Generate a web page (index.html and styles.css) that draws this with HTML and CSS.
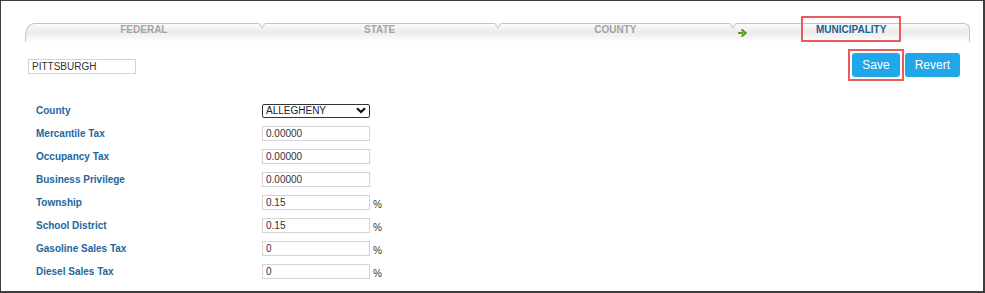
FILE: index.html
```html
<!DOCTYPE html>
<html lang="en">
<head>
    <meta charset="UTF-8">
    <meta name="viewport" content="width=device-width, initial-scale=1.0">
    <title>Municipality</title>
    <link rel="stylesheet" href="styles.css">
</head>
<body>
    <div class="frame">
        <ul class="tabs">
            <li class="tab first">FEDERAL</li>
            <li class="tab">STATE</li>
            <li class="tab">COUNTY</li>
            <li class="tab last active">
                <svg class="go" width="9" height="8" viewBox="0 0 9 8">
                    <path d="M0 4h5" stroke="#5c9e22" stroke-width="2"/>
                    <path d="M3.5 0.5 L7.5 4 L3.5 7.5" fill="none" stroke="#5c9e22" stroke-width="2.2"/>
                </svg>
                <span class="mark">MUNICIPALITY</span>
            </li>
        </ul>

        <div class="actions">
            <input class="city" type="text" value="PITTSBURGH">
            <div class="buttons">
                <span class="mark-box"><button class="btn">Save</button></span>
                <button class="btn">Revert</button>
            </div>
        </div>

        <div class="form">
            <div class="row">
                <label>County</label>
                <span class="select-wrap">
                    <select>
                        <option>ALLEGHENY</option>
                    </select>
                    <svg class="chev" width="10" height="7" viewBox="0 0 10 7">
                        <path d="M1 1.2 L5 5 L9 1.2" fill="none" stroke="#111" stroke-width="2.2"/>
                    </svg>
                </span>
            </div>
            <div class="row">
                <label>Mercantile Tax</label>
                <input type="text" value="0.00000">
            </div>
            <div class="row">
                <label>Occupancy Tax</label>
                <input type="text" value="0.00000">
            </div>
            <div class="row">
                <label>Business Privilege</label>
                <input type="text" value="0.00000">
            </div>
            <div class="row">
                <label>Township</label>
                <input type="text" value="0.15">
                <span class="pct">%</span>
            </div>
            <div class="row">
                <label>School District</label>
                <input type="text" value="0.15">
                <span class="pct">%</span>
            </div>
            <div class="row">
                <label>Gasoline Sales Tax</label>
                <input type="text" value="0">
                <span class="pct">%</span>
            </div>
            <div class="row">
                <label>Diesel Sales Tax</label>
                <input type="text" value="0">
                <span class="pct">%</span>
            </div>
        </div>
    </div>
</body>
</html>
```

FILE: styles.css
```css
* {
    margin: 0;
    padding: 0;
    box-sizing: border-box;
}
body {
    font-family: "Liberation Sans", Arial, sans-serif;
    background: #fff;
}
.frame {
    width: 985px;
    height: 293px;
    border: 1px solid #3d3d3d;
    border-right-width: 2px;
    border-bottom-width: 2px;
    overflow: hidden;
}

/* tabs */
.tabs {
    display: flex;
    list-style: none;
    margin: 22px 0 0 24px;
    width: 945px;
    height: 19px;
}
.tab {
    position: relative;
    flex: 1;
    text-align: center;
    font-size: 10px;
    font-weight: bold;
    color: #a3a3a3;
    line-height: 12px;
    border-top: 1px solid #c3c3c3;
    background: linear-gradient(#fbfbfb, #ebebeb 45%, #fff);
}
.tab::after {
    content: "";
    position: absolute;
    right: -4px;
    top: -1px;
    border-left: 4px solid transparent;
    border-right: 4px solid transparent;
    border-top: 6px solid #cfcfcf;
    z-index: 1;
}
.tab::before {
    content: "";
    position: absolute;
    right: -3px;
    top: -1px;
    border-left: 3px solid transparent;
    border-right: 3px solid transparent;
    border-top: 4px solid #f6f6f6;
    z-index: 2;
}
.tab.last::after,
.tab.last::before {
    display: none;
}
.tab.first {
    border-left: 1px solid #c3c3c3;
    border-top-left-radius: 10px 12px;
}
.tab.last {
    border-right: 1px solid #c3c3c3;
    border-top-right-radius: 6px;
}
.tab.active {
    color: #1c5f93;
}
.go {
    position: absolute;
    left: 5px;
    top: 5px;
}
.mark {
    padding: 6px 13px 5px;
    outline: 2px solid #e85a5c;
}

/* save row */
.actions {
    display: flex;
    justify-content: space-between;
    align-items: flex-start;
    margin-top: 7px;
    padding: 0 23px 0 27px;
}
.city {
    margin-top: 10px;
}
.buttons {
    display: flex;
    align-items: center;
    gap: 1px;
}
.mark-box {
    display: block;
    border: 2px solid #e85a5c;
    padding: 2px;
}
.btn {
    display: block;
    height: 24px;
    padding: 0 10px;
    border: none;
    border-radius: 3px;
    background: #1fa7ea;
    color: #fff;
    font-family: "Liberation Sans", Arial, sans-serif;
    font-size: 12px;
}

/* form */
input[type=text] {
    width: 108px;
    height: 15px;
    border: 1px solid #d4d4d4;
    padding: 0 3px;
    font-family: "Liberation Sans", Arial, sans-serif;
    font-size: 10px;
    color: #333;
}
.form {
    margin-top: 18px;
    padding-left: 35px;
}
.row {
    display: flex;
    align-items: center;
    height: 23px;
}
.row label {
    width: 226px;
    font-size: 10px;
    font-weight: bold;
    color: #22679c;
}
.select-wrap {
    position: relative;
    display: block;
}
select {
    display: block;
    width: 108px;
    height: 14px;
    border: 1px solid #333;
    border-radius: 2px;
    appearance: none;
    background: #fff;
    padding: 0 3px;
    font-family: "Liberation Sans", Arial, sans-serif;
    font-size: 10px;
    line-height: 12px;
    color: #1b1b3c;
}
.chev {
    position: absolute;
    right: 4px;
    top: 3px;
}
.pct {
    margin: 4px 0 0 3px;
    font-size: 10px;
    color: #333;
}
```
